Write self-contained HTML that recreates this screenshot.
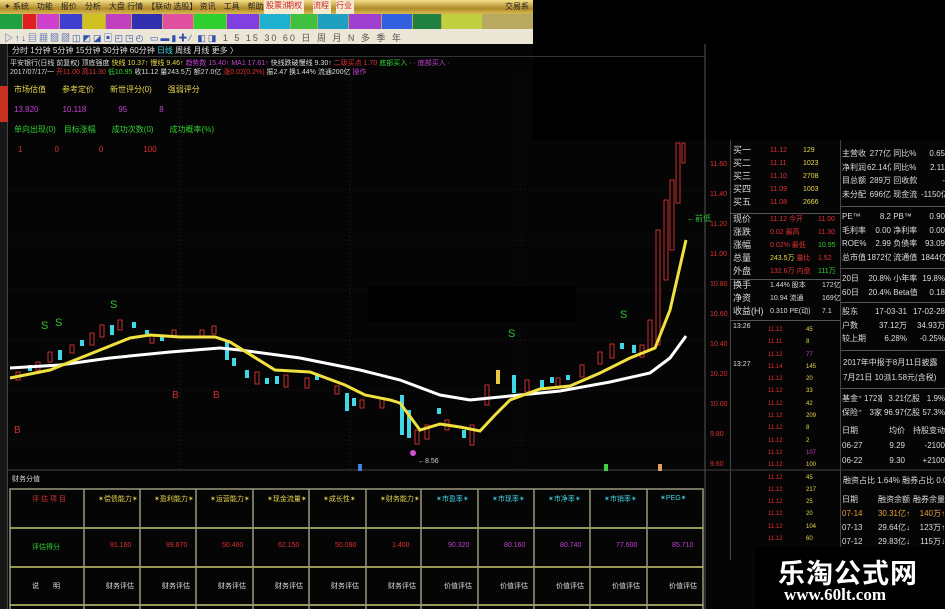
<!DOCTYPE html>
<html><head><meta charset="utf-8"><style>
*{margin:0;padding:0;box-sizing:border-box}
body{width:945px;height:609px;background:#050505;position:relative;overflow:hidden;font-family:"Liberation Sans","Noto Sans CJK SC",sans-serif;font-size:9px;color:#ccc}
.a{position:absolute;white-space:nowrap}
.menu{left:0;top:0;width:533px;height:14px;background:linear-gradient(#f4e08a,#b08a2a 60%,#d8b850);}
.row2{left:0;top:14px;width:533px;height:15px;background:#b9a860;display:flex}
.row2 span{height:15px;display:block;margin-right:1px}
.tb{left:0;top:29px;width:533px;height:15px;background:#ece6d6}
.y{color:#e8d84a}.r{color:#e03030}.g{color:#30d030}.m{color:#c040d0}.w{color:#ddd}.c{color:#40d8e8}
.rp{font-size:9px;line-height:13px}
table.f{position:absolute;left:842px;width:103px;border-collapse:collapse;table-layout:fixed;color:#ddd;font-size:8px}
table.f td{white-space:nowrap;overflow:hidden;padding:0;height:13.5px}
table.f td.v{text-align:right}
</style></head><body>
<div class="a menu"><span class="a" style="left:4px;top:1px;color:#222;font-size:8px">✦ 系统　功能　报价　分析　大盘 行情　【联动 选股】 资讯　工具　帮助</span>
<span class="a" style="left:264px;top:0;width:28px;height:14px;background:#f4ead0;color:#d02020;font-size:8px;text-align:center">股票池</span>
<span class="a" style="left:286px;top:0;width:18px;height:14px;background:#f4ead0;color:#d02020;font-size:8px">期权</span>
<span class="a" style="left:313px;top:0;width:18px;height:14px;background:#f4ead0;color:#d02020;font-size:8px">流程</span>
<span class="a" style="left:336px;top:0;width:18px;height:14px;background:#f4ead0;color:#d02020;font-size:8px">行业</span>
<span class="a" style="left:505px;top:1px;color:#222;font-size:8px">交易系</span></div>
<div class="a row2"><span style="background:#20a040;width:22px"></span><span style="background:#e02020;width:13px"></span><span style="background:#d040d0;width:22px"></span><span style="background:#4040d0;width:22px"></span><span style="background:#d0c020;width:22px"></span><span style="background:#c040c0;width:25px"></span><span style="background:#3030b0;width:30px"></span><span style="background:#e050a0;width:30px"></span><span style="background:#30d030;width:32px"></span><span style="background:#8040e0;width:32px"></span><span style="background:#20b0d0;width:30px"></span><span style="background:#40c040;width:26px"></span><span style="background:#20a0c0;width:30px"></span><span style="background:#a040d0;width:32px"></span><span style="background:#3060e0;width:30px"></span><span style="background:#208040;width:28px"></span><span style="background:#c0d040;width:40px"></span></div>
<div class="a tb"><span class="a" style="left:4px;top:2px;color:#3050b0;font-size:9px;letter-spacing:2px">▷↑↓▤▦▧▨◫◩◪▣◰◳◴ ▭▬▮✚∕ ◧◨ <span style="color:#555">1 5 15 30 60 日 周 月 N 多 季 年</span></span></div>
<div class="a" style="left:533px;top:0;width:412px;height:140px;background:#000"></div>
<div class="a" style="left:0;top:44px;width:8px;height:565px;background:#181818;border-right:1px solid #444"></div>
<div class="a" style="left:0;top:86px;width:8px;height:36px;background:#c83020"></div>
<div class="a w" style="left:12px;top:45px;font-size:8px">分时 1分钟 5分钟 15分钟 30分钟 60分钟 <span class="c">日线</span> 周线 月线 更多 〉</div>
<div class="a" style="left:8px;top:56px;width:697px;height:1px;background:#333"></div>
<div class="a w" style="left:10px;top:58px;font-size:7px">平安银行(日线 前复权) 顶底强度 <span class="y">快线 10.37↑ 慢线 9.46↑</span> <span class="m">趋势数 15.40↑ MA1 17.61↑</span> 快线跌破慢线 9.30↑ <span class="r">二级买点 1.70</span> <span class="g">底部买入 ·</span> <span class="m">· 底部买入 ·</span></div>
<div class="a w" style="left:10px;top:67px;font-size:7px">2017/07/17/一 <span class="r">开11.00 高11.30</span> <span class="g">低10.95</span> 收11.12 量243.5万 额27.0亿 <span class="r">涨0.02(0.2%)</span> 振2.47 换1.44% 流通200亿 <span class="m">操作</span></div>
<div class="a y" style="left:14px;top:84px;font-size:8px">市场估值　　参考定价　　新世评分(0)　　强弱评分</div>
<div class="a m" style="left:14px;top:104px;font-size:8px">13.820　　　10.118　　　　95　　　　8</div>
<div class="a g" style="left:14px;top:124px;font-size:8px">单向出现(0)　目标涨幅　　成功次数(0)　　成功概率(%)</div>
<div class="a r" style="left:18px;top:144px;font-size:8px">1　　　　0　　　　　0　　　　　100</div>
<svg class="a" style="left:0;top:0" width="945" height="609">
<g stroke="#222" stroke-dasharray="1 3"><line x1="9" y1="190" x2="705" y2="190"/><line x1="9" y1="240" x2="705" y2="240"/><line x1="9" y1="290" x2="705" y2="290"/><line x1="9" y1="340" x2="705" y2="340"/><line x1="9" y1="390" x2="705" y2="390"/><line x1="9" y1="440" x2="705" y2="440"/>
<line x1="180" y1="76" x2="180" y2="470"/><line x1="350" y1="76" x2="350" y2="470"/><line x1="520" y1="76" x2="520" y2="470"/></g>
<rect x="368" y="287" width="208" height="34" fill="#000"/>
<line x1="705" y1="44" x2="705" y2="609" stroke="#555"/>
<line x1="8" y1="470" x2="945" y2="470" stroke="#444"/>
<g stroke="#c83030" fill="none" stroke-width="1">
<rect x="16" y="372" width="4" height="8"/><rect x="36" y="362" width="4" height="8"/><rect x="48" y="352" width="4" height="10"/><rect x="70" y="345" width="4" height="8"/><rect x="90" y="333" width="4" height="12"/><rect x="100" y="325" width="4" height="12"/><rect x="118" y="320" width="4" height="10"/><rect x="150" y="335" width="4" height="8"/><rect x="172" y="330" width="4" height="6"/><rect x="200" y="330" width="4" height="6"/><rect x="212" y="326" width="4" height="8"/><rect x="255" y="372" width="4" height="12"/><rect x="284" y="375" width="4" height="12"/><rect x="305" y="378" width="4" height="10"/><rect x="335" y="386" width="4" height="8"/><rect x="360" y="400" width="4" height="8"/><rect x="380" y="398" width="4" height="10"/><rect x="415" y="430" width="4" height="14"/><rect x="425" y="425" width="4" height="14"/><rect x="445" y="420" width="4" height="10"/><rect x="470" y="425" width="4" height="20"/><rect x="485" y="385" width="4" height="20"/><rect x="525" y="380" width="4" height="12"/><rect x="556" y="378" width="4" height="10"/><rect x="580" y="365" width="4" height="12"/><rect x="598" y="352" width="4" height="12"/><rect x="610" y="344" width="4" height="14"/><rect x="640" y="345" width="4" height="12"/><rect x="648" y="320" width="4" height="30"/><rect x="656" y="230" width="4" height="115"/><rect x="664" y="200" width="4" height="80"/><rect x="670" y="180" width="4" height="70"/><rect x="676" y="143" width="4" height="60"/><rect x="682" y="143" width="3" height="20"/>
</g>
<g fill="#40d8e8">
<rect x="28" y="365" width="4" height="6"/><rect x="58" y="350" width="4" height="10"/><rect x="80" y="340" width="4" height="6"/><rect x="110" y="325" width="4" height="10"/><rect x="132" y="322" width="4" height="6"/><rect x="145" y="330" width="4" height="4"/><rect x="160" y="335" width="4" height="6"/><rect x="225" y="340" width="4" height="20"/><rect x="232" y="358" width="4" height="8"/><rect x="245" y="370" width="4" height="8"/><rect x="265" y="378" width="4" height="6"/><rect x="275" y="376" width="4" height="8"/><rect x="315" y="375" width="4" height="5"/><rect x="345" y="393" width="4" height="18"/><rect x="352" y="398" width="4" height="8"/><rect x="400" y="395" width="4" height="40"/><rect x="407" y="410" width="4" height="28"/><rect x="437" y="408" width="4" height="6"/><rect x="462" y="430" width="4" height="8"/><rect x="512" y="375" width="4" height="18"/><rect x="540" y="380" width="4" height="8"/><rect x="550" y="377" width="4" height="6"/><rect x="566" y="375" width="4" height="5"/><rect x="620" y="343" width="4" height="6"/><rect x="632" y="345" width="4" height="8"/></g>
<rect x="496" y="370" width="4" height="14" fill="#e8c840"/>
<polyline fill="none" stroke="#fff" stroke-width="3" points="10,368 60,365 110,358 170,352 220,348 240,350 300,358 360,370 400,380 440,395 470,400 510,396 560,391 610,382 650,373 670,358 686,336"/>
<polyline fill="none" stroke="#f0e040" stroke-width="3" points="10,378 50,370 100,350 130,338 150,335 180,337 215,337 230,342 275,370 310,372 345,385 365,395 390,400 400,403 420,430 440,424 460,427 480,431 495,415 510,400 540,389 570,386 600,373 630,358 655,348 670,310 686,240"/>
<g fill="#30c030" font-size="11" font-family="Liberation Sans"><text x="41" y="329">S</text><text x="55" y="326">S</text><text x="110" y="308">S</text><text x="508" y="337">S</text><text x="620" y="318">S</text></g>
<g fill="#d03030" font-size="10" font-family="Liberation Sans"><text x="14" y="433">B</text><text x="172" y="398">B</text><text x="213" y="398">B</text></g>
<text x="687" y="221" fill="#30c030" font-size="8">←前低</text>
<circle cx="413" cy="453" r="3" fill="#d050d0"/><text x="418" y="463" fill="#ccc" font-size="7">←8.56</text>
<rect x="358" y="464" width="4" height="7" fill="#4080e0"/><rect x="604" y="464" width="4" height="7" fill="#40d040"/><rect x="658" y="464" width="4" height="7" fill="#e0a060"/>
<g stroke="#9a9a80" stroke-width="1.5" fill="none"><rect x="10" y="489" width="693" height="125"/>
<line x1="10" y1="528" x2="703" y2="528" stroke="#c8c870"/><line x1="10" y1="567" x2="703" y2="567" stroke="#c8c870"/><line x1="10" y1="605" x2="703" y2="605" stroke="#c8c870"/>
<line x1="84" y1="489" x2="84" y2="609"/><line x1="140" y1="489" x2="140" y2="609"/><line x1="196" y1="489" x2="196" y2="609"/><line x1="253" y1="489" x2="253" y2="609"/><line x1="309" y1="489" x2="309" y2="609"/><line x1="366" y1="489" x2="366" y2="609"/><line x1="421" y1="489" x2="421" y2="609"/><line x1="478" y1="489" x2="478" y2="609"/><line x1="534" y1="489" x2="534" y2="609"/><line x1="590" y1="489" x2="590" y2="609"/><line x1="647" y1="489" x2="647" y2="609"/></g>
</svg>
<div class="a w" style="left:12px;top:474px;font-size:7px">财务分值</div>
<div class="a" style="left:10px;top:494px;width:693px;font-size:7px">
<span class="a r" style="left:22px">评 估 项 目</span><span class="a y" style="left:88px">✶偿债能力✶</span><span class="a y" style="left:144px">✶盈利能力✶</span><span class="a y" style="left:200px">✶运营能力✶</span><span class="a y" style="left:257px">✶现金流量✶</span><span class="a y" style="left:313px">✶成长性✶</span><span class="a y" style="left:370px">✶财务能力✶</span><span class="a c" style="left:426px">✶市盈率✶</span><span class="a c" style="left:482px">✶市现率✶</span><span class="a c" style="left:538px">✶市净率✶</span><span class="a c" style="left:594px">✶市销率✶</span><span class="a c" style="left:650px">✶PEG✶</span></div>
<div class="a" style="left:10px;top:542px;width:693px;font-size:7px">
<span class="a g" style="left:22px">评估得分</span><span class="a r" style="left:100px">91.160</span><span class="a r" style="left:156px">99.670</span><span class="a r" style="left:212px">50.460</span><span class="a r" style="left:268px">62.150</span><span class="a r" style="left:325px">50.090</span><span class="a r" style="left:382px">1.400</span><span class="a m" style="left:438px">90.320</span><span class="a m" style="left:494px">80.160</span><span class="a m" style="left:550px">80.740</span><span class="a m" style="left:606px">77.600</span><span class="a m" style="left:662px">85.710</span></div>
<div class="a w" style="left:10px;top:581px;width:693px;font-size:7px">
<span class="a" style="left:22px">说　　明</span><span class="a" style="left:96px">财务评估</span><span class="a" style="left:152px">财务评估</span><span class="a" style="left:208px">财务评估</span><span class="a" style="left:265px">财务评估</span><span class="a" style="left:321px">财务评估</span><span class="a" style="left:378px">财务评估</span><span class="a" style="left:434px">价值评估</span><span class="a" style="left:490px">价值评估</span><span class="a" style="left:546px">价值评估</span><span class="a" style="left:602px">价值评估</span><span class="a" style="left:659px">价值评估</span></div>
<div class="a r" style="left:710px;top:150px;font-size:7px;line-height:30px">11.60<br>11.40<br>11.20<br>11.00<br>10.80<br>10.60<br>10.40<br>10.20<br>10.00<br>9.80<br>9.60</div>
<div class="a" style="left:730px;top:140px;width:1px;height:420px;background:#444"></div>
<div class="a" style="left:840px;top:140px;width:1px;height:420px;background:#444"></div>
<div class="a" style="left:730px;top:213px;width:110px;height:1px;background:#555"></div>
<div class="a" style="left:730px;top:279px;width:110px;height:1px;background:#555"></div>
<div class="a" style="left:730px;top:320px;width:110px;height:1px;background:#555"></div>
<div class="a w rp" style="left:733px;top:144px">买一<br>买二<br>买三<br>买四<br>买五</div>
<div class="a r rp" style="left:770px;top:144px;font-size:7px">11.12<br>11.11<br>11.10<br>11.09<br>11.08</div>
<div class="a y rp" style="left:803px;top:144px;font-size:7px">129<br>1023<br>2708<br>1003<br>2666</div>
<div class="a w rp" style="left:733px;top:213px">现价<br>涨跌<br>涨幅<br>总量<br>外盘</div>
<div class="a r rp" style="left:770px;top:213px;font-size:7px">11.12 今开<br>0.02 最高<br>0.02% 最低<br><span class="y">243.5万</span> 量比<br>132.6万 内盘</div>
<div class="a r rp" style="left:818px;top:213px;font-size:7px">11.00<br>11.30<br><span class="g">10.95</span><br>1.52<br><span class="g">111万</span></div>
<div class="a w rp" style="left:733px;top:279px">换手<br>净资<br>收益(H)</div>
<div class="a w rp" style="left:770px;top:279px;font-size:7px">1.44% 股本<br>10.94 流通<br>0.310 PE(动)</div>
<div class="a w rp" style="left:822px;top:279px;font-size:7px">172亿<br>169亿<br>7.1</div>
<div class="a w" style="left:733px;top:323px;font-size:7px">13:26</div>
<div class="a w" style="left:733px;top:361px;font-size:7px">13:27</div>
<div class="a r" style="left:768px;top:324px;font-size:6px;line-height:12.3px">11.12<br>11.11<br>11.12<br>11.14<br>11.12<br>11.12<br>11.12<br>11.12<br>11.12<br>11.12<br>11.12<br>11.12<br>11.12<br>11.12<br>11.12<br>11.12<br>11.12<br>11.12<br>11.12<br>11.12</div>
<div class="a y" style="left:806px;top:324px;font-size:6px;line-height:12.3px">45<br>8<br><span class="m">77</span><br>145<br>20<br>33<br>42<br>209<br>8<br>2<br><span class="m">107</span><br>100<br>45<br>217<br>25<br>20<br>104<br>60<br>38</div>
<!-- finance panel -->
<table class="f" style="top:147px"><colgroup><col style="width:25px"><col style="width:24px"><col style="width:30px"><col style="width:24px"></colgroup>
<tr><td>主营收</td><td class="v">277亿</td><td>&nbsp;同比%</td><td class="v">0.65</td></tr>
<tr><td>净利润</td><td class="v">62.14亿</td><td>&nbsp;同比%</td><td class="v">2.11</td></tr>
<tr><td>目总额</td><td class="v">289万</td><td>&nbsp;回收款</td><td class="v">-</td></tr>
<tr><td>未分配</td><td class="v">696亿</td><td>&nbsp;现金流</td><td class="v">-1150亿</td></tr></table>
<div class="a" style="left:841px;top:206px;width:104px;height:1px;background:#555"></div>
<table class="f" style="top:210px"><colgroup><col style="width:25px"><col style="width:24px"><col style="width:30px"><col style="width:24px"></colgroup>
<tr><td>PE™</td><td class="v">8.2</td><td>&nbsp;PB™</td><td class="v">0.90</td></tr>
<tr><td>毛利率</td><td class="v">0.00</td><td>&nbsp;净利率</td><td class="v">0.00</td></tr>
<tr><td>ROE%</td><td class="v">2.99</td><td>&nbsp;负债率</td><td class="v">93.09</td></tr>
<tr><td>总市值</td><td class="v">1872亿</td><td>&nbsp;流通值</td><td class="v">1844亿</td></tr></table>
<div class="a" style="left:841px;top:268px;width:104px;height:1px;background:#555"></div>
<table class="f" style="top:272px"><colgroup><col style="width:20px"><col style="width:29px"><col style="width:30px"><col style="width:24px"></colgroup>
<tr><td>20日</td><td class="v">20.8%</td><td>&nbsp;小年率</td><td class="v">19.8%</td></tr>
<tr><td>60日</td><td class="v">20.4%</td><td>&nbsp;Beta值</td><td class="v">0.18</td></tr></table>
<div class="a" style="left:841px;top:302px;width:104px;height:1px;background:#555"></div>
<table class="f" style="top:305px"><colgroup><col style="width:25px"><col style="width:40px"><col style="width:38px"></colgroup>
<tr><td>股东</td><td class="v">17-03-31</td><td class="v">17-02-28</td></tr>
<tr><td>户数</td><td class="v">37.12万</td><td class="v">34.93万</td></tr>
<tr><td>较上期</td><td class="v">6.28%</td><td class="v">-0.25%</td></tr></table>
<div class="a" style="left:841px;top:350px;width:104px;height:1px;background:#555"></div>
<div class="a w" style="left:843px;top:355px;font-size:8px;line-height:15px">2017年中报于8月11日披露<br>7月21日 10派1.58元(含税)</div>
<div class="a" style="left:841px;top:388px;width:104px;height:1px;background:#555"></div>
<table class="f" style="top:392px"><colgroup><col style="width:22px"><col style="width:18px"><col style="width:38px"><col style="width:25px"></colgroup>
<tr><td>基金⁺</td><td class="v">172家</td><td class="v">3.21亿股</td><td class="v">1.9%</td></tr>
<tr><td>保险⁺</td><td class="v">3家</td><td class="v">96.97亿股</td><td class="v">57.3%</td></tr></table>
<table class="f" style="top:423px"><colgroup><col style="width:30px"><col style="width:33px"><col style="width:40px"></colgroup>
<tr><td style="height:15px">日期</td><td class="v">均价</td><td class="v">持股变动</td></tr>
<tr><td style="height:15px">06-27</td><td class="v">9.29</td><td class="v">-2100</td></tr>
<tr><td style="height:15px">06-22</td><td class="v">9.30</td><td class="v">+2100</td></tr></table>
<div class="a w" style="left:843px;top:475px;font-size:8px">融资占比 1.64% 融券占比 0.01%</div>
<table class="f" style="top:492px"><colgroup><col style="width:28px"><col style="width:40px"><col style="width:35px"></colgroup>
<tr><td style="height:14px">日期</td><td class="v">融资余额</td><td class="v">融券余量</td></tr>
<tr style="color:#e8a040"><td style="height:14px">07-14</td><td class="v">30.31亿↑</td><td class="v">140万↑</td></tr>
<tr><td style="height:14px">07-13</td><td class="v">29.64亿↓</td><td class="v">123万↑</td></tr>
<tr><td style="height:14px">07-12</td><td class="v">29.83亿↓</td><td class="v">115万↓</td></tr></table>
<div class="a" style="left:755px;top:547px;width:190px;height:62px;background:#000"></div>
<div class="a" style="left:778px;top:552px;font-size:27px;font-weight:bold;color:#fff;letter-spacing:1px">乐淘公式网</div>
<div class="a" style="left:784px;top:585px;font-size:17px;font-weight:bold;color:#fff;font-family:'Liberation Serif',serif">www.60lt.com</div>
</body></html>
